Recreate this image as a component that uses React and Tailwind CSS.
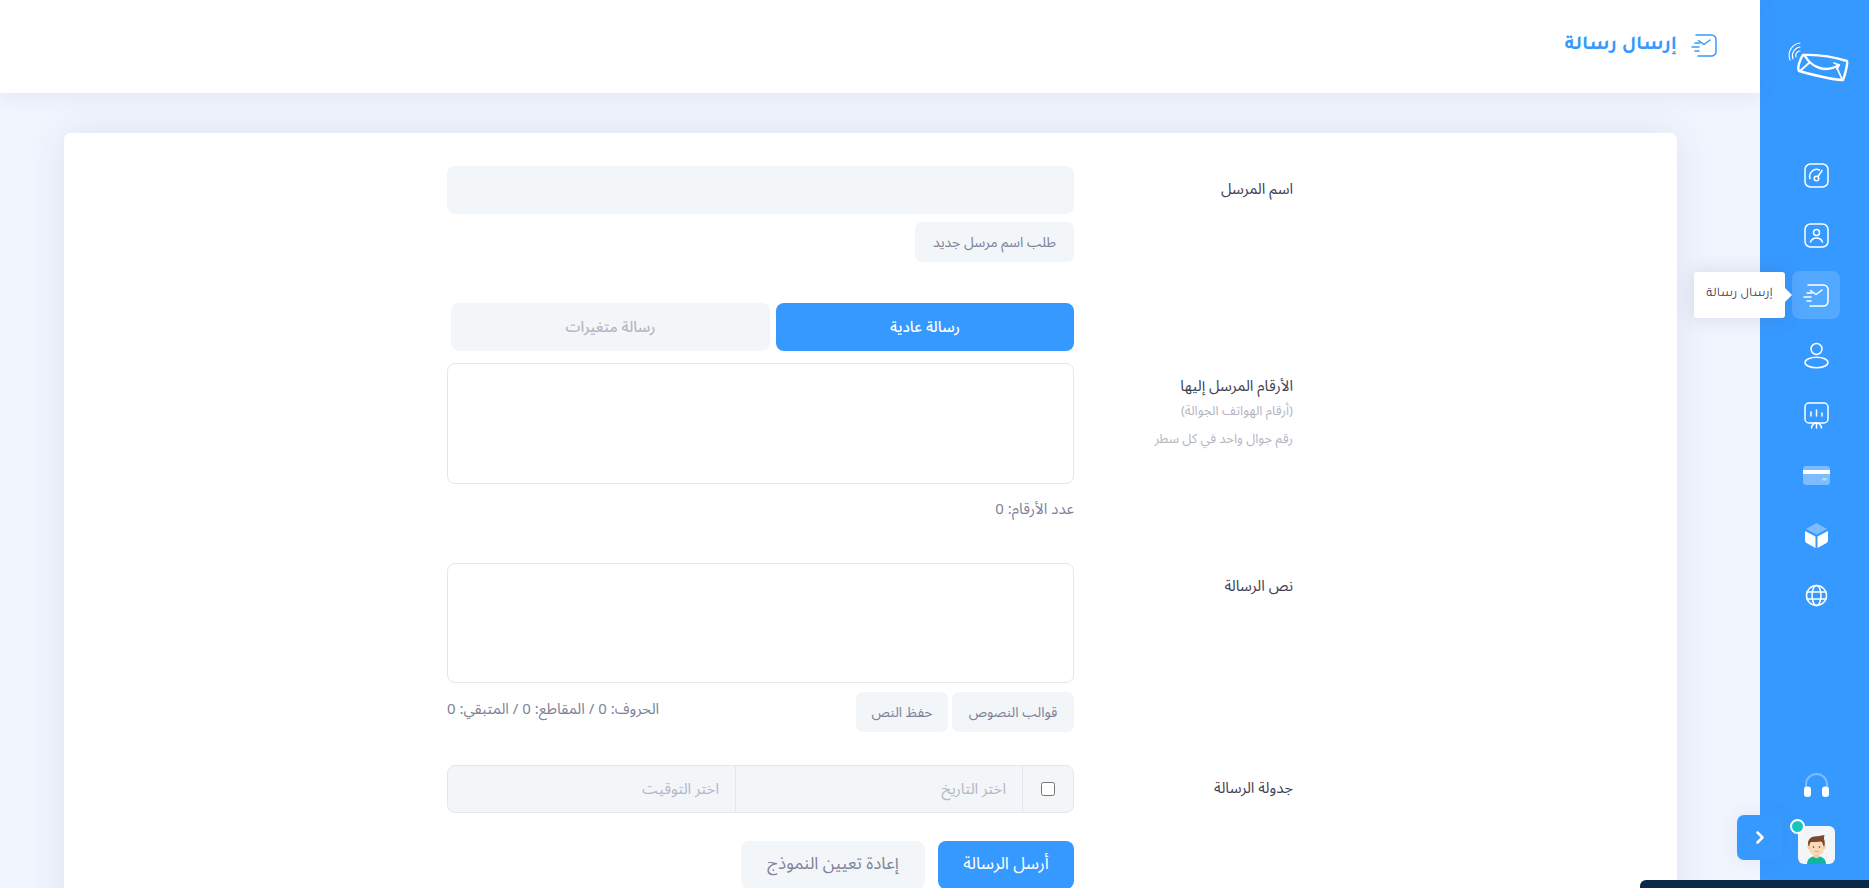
const Stroke = ({ w, h, vb, children, cls = "" }) => (
  <svg width={w} height={h} viewBox={vb} fill="none" stroke="currentColor" strokeWidth="1.5" strokeLinecap="round" strokeLinejoin="round" className={cls}>{children}</svg>
);

const SendIcon = ({ cls }) => (
  <Stroke w={26} h={23} vb="0 0 26 23" cls={cls}>
    <path d="M5 1h15.500A4.500 4.500 0 0 1 25 5.500v12a4.500 4.500 0 0 1-4.500 4.500H7" />
    <path d="M7.500 6.500 13 10.500l6-4.500" />
    <path d="M4 9h5M1 13h7M4 17h4" />
  </Stroke>
);

const icons = [
  <Stroke w={25} h={25} vb="0 0 25 25" key="a">
    <rect x="1" y="1" width="23" height="23" rx="5.500" />
    <path d="M6 15.500a7 7 0 0 1 9.500-8.500" />
    <circle cx="12.500" cy="15.500" r="2.300" />
    <path d="M14 13.500l4-6" />
  </Stroke>,
  <Stroke w={25} h={25} vb="0 0 25 25" key="b">
    <rect x="1" y="1" width="23" height="23" rx="5.500" />
    <circle cx="12.500" cy="9.500" r="3" />
    <path d="M6.500 19a6.500 6.500 0 0 1 12 0" />
  </Stroke>,
  <SendIcon key="c" />,
  <Stroke w={25} h={27} vb="0 0 25 27" key="d">
    <circle cx="12.500" cy="7" r="5.500" />
    <ellipse cx="12.500" cy="20.500" rx="11.500" ry="5.300" />
  </Stroke>,
  <Stroke w={25} h={27} vb="0 0 25 27" key="e">
    <rect x="1" y="1" width="23" height="20" rx="4" />
    <path d="M7 10v4M12.500 8v6M18 11v3M12.500 21v5M7.500 26a5 5 0 0 1 10 0" />
  </Stroke>,
  <svg width="27" height="19" viewBox="0 0 27 19" key="f">
    <rect width="27" height="19" rx="3" fill="#fff" fillOpacity=".35" />
    <rect y="4" width="27" height="4" fill="#fff" />
    <rect x="19" y="12" width="5" height="2.500" rx="1" fill="#fff" fillOpacity=".4" />
  </svg>,
  <svg width="23" height="25" viewBox="0 0 23 25" key="g">
    <path d="M11.500 0 22 6l-10.500 5.500L1 6z" fill="#fff" fillOpacity=".35" />
    <path d="M0 8l10.500 5.500V25L1.500 20A3 3 0 0 1 0 17.500zM23 8l-10.500 5.500V25l9-5a3 3 0 0 0 1.500-2.500z" fill="#fff" />
  </svg>,
  <Stroke w={23} h={23} vb="0 0 23 23" key="h">
    <circle cx="11.500" cy="11.500" r="10" />
    <ellipse cx="11.500" cy="11.500" rx="4.500" ry="10" />
    <path d="M2 8h19M2 15h19" />
  </Stroke>,
];

const Logo = () => (
  <svg width="75" height="55" viewBox="0 0 75 55" fill="none" stroke="#fff" strokeLinecap="round" strokeLinejoin="round">
    <path d="M21 20 C 38 19 52 22 65 26 C 66 28 63 40 61 45 C 50 45 32 40 17 36 C 15 33 18 24 21 20Z" strokeWidth="2.400" />
    <path d="M23 21 C 30 33 44 38 57 30" strokeWidth="2.400" />
    <path d="M52 28l5 2-2 4" strokeWidth="1.800" />
    <path d="M18 36l9-8M55 33l5 11" strokeWidth="1.800" />
    <path d="M8 25C5 17 10 9 18 8M11 24C9 19 12 13 18 12M14 22C13 19 15 16 18 16" strokeWidth="1.100" />
  </svg>
);

const Avatar = () => (
  <svg width="37" height="38" viewBox="0 0 37 38" className="block rounded-[6px] bg-[#f3f6f9]">
    <path d="M9 38c0-5 4-7 6-7.500h7c2 .5 6 2.500 6 7.500z" fill="#12b5a0" />
    <path d="M15.500 27h6v4c-1.500 1.500-4.500 1.500-6 0z" fill="#f5c9a0" />
    <rect x="11" y="14" width="15" height="15" rx="6" fill="#fcd9b6" />
    <rect x="9.500" y="19" width="2.500" height="4" rx="1" fill="#f5c9a0" />
    <rect x="25" y="19" width="2.500" height="4" rx="1" fill="#f5c9a0" />
    <path d="M10.500 20c-1.500-5 1-9 6-9.500 3-.3 6-.5 10-1.500-.5 2-.5 3-.5 4 1 2 1 5 .5 7l-1.500-.5c0-2-1-3.500-2-4-3 .5-7 .5-10 .500-1 1-1.500 2-1.500 3.500z" fill="#7a4a2e" />
    <circle cx="15.500" cy="21" r=".8" fill="#5c3a28" />
    <circle cx="21.500" cy="21" r=".8" fill="#5c3a28" />
    <path d="M16.500 25.500h4" stroke="#d99a78" strokeWidth=".8" />
  </svg>
);

const Row = ({ label, sub, children }) => (
  <div className="flex">
    <div className="w-[219px] shrink-0 pt-[11px]">
      {label && <div className="text-[15px] leading-6 text-[#3f4254]">{label}</div>}
      {sub && sub.map((s) => (
        <div key={s} className="text-[13px] leading-[27.500px] text-[#b5b5c3]">{s}</div>
      ))}
    </div>
    <div className="w-[627px] shrink-0">{children}</div>
  </div>
);

const GreyBtn = ({ children, cls = "" }) => (
  <button className={`h-10 rounded-[6.500px] bg-[#f3f6f9] text-[14px] text-[#7e8299] ${cls}`}>{children}</button>
);

export default function App() {
  return (
    <div className="relative flex h-[888px] w-full overflow-hidden bg-[#f0f5fe] font-['Noto_Sans_Arabic','Noto_Sans',sans-serif]">
      <main className="flex h-full min-w-0 flex-1 flex-col">
        <header dir="rtl" className="relative z-10 flex h-[93px] shrink-0 items-center gap-[14px] bg-white pr-[43px] pb-[2px] text-[#3699ff] shadow-[0_4px_20px_rgba(82,63,105,0.08)]">
          <SendIcon />
          <h1 className="font-['Tajawal',sans-serif] text-[20px] font-bold">إرسال رسالة</h1>
        </header>

        <section className="mt-10 mr-[83px] ml-16 rounded-[6.500px] bg-white pr-[384px] pt-[33px] pb-10 shadow-[0_0_40px_rgba(82,63,105,0.1)]" dir="rtl">
          <Row label="اسم المرسل">
            <input className="block h-12 w-full rounded-[8px] bg-[#f3f6f9] px-4 outline-none" />
            <GreyBtn cls="mt-2 w-[159px]">طلب اسم مرسل جديد</GreyBtn>
          </Row>

          <div className="mt-[41px]">
            <Row>
              <div className="flex gap-[6px] pl-1">
                <button className="h-12 w-[298px] rounded-[8px] bg-[#3699ff] text-[15px] font-medium text-white">رسالة عادية</button>
                <button className="h-12 w-[319px] rounded-[8px] bg-[#f3f6f9] text-[15px] font-medium text-[#b5b5c3]">رسالة متغيرات</button>
              </div>
            </Row>
          </div>

          <div className="mt-3">
            <Row label="الأرقام المرسل إليها" sub={["(أرقام الهواتف الجوالة)", "رقم جوال واحد في كل سطر"]}>
              <textarea className="block h-[121px] w-full resize-none rounded-[8px] border border-[#e4e6ef] bg-white outline-none" />
              <p className="mt-[14px] text-[15px] leading-[22px] text-[#7e8299]">عدد الأرقام: 0</p>
            </Row>
          </div>

          <div className="mt-[43px]">
            <Row label="نص الرسالة">
              <textarea className="block h-[120px] w-full resize-none rounded-[8px] border border-[#e4e6ef] bg-white outline-none" />
              <div className="mt-[9px] flex justify-between">
                <div className="flex gap-[4px]">
                  <GreyBtn cls="w-[122px]">قوالب النصوص</GreyBtn>
                  <GreyBtn cls="w-[92px]">حفظ النص</GreyBtn>
                </div>
                <p className="text-[15px] leading-[34px] text-[#7e8299]">الحروف: 0 / المقاطع: 0 / المتبقي: 0</p>
              </div>
            </Row>
          </div>

          <div className="mt-[33px]">
            <Row label="جدولة الرسالة">
              <div className="flex h-12 w-full items-stretch overflow-hidden rounded-[8px] border border-[#e4e6ef] bg-[#f3f6f9]">
                <div className="flex w-[51px] shrink-0 items-center justify-center border-l border-[#e4e6ef]">
                  <input type="checkbox" className="m-0 h-[14px] w-[14px]" />
                </div>
                <input placeholder="اختر التاريخ" className="w-[287px] shrink-0 border-l border-[#e4e6ef] bg-transparent px-4 text-[15px] outline-none placeholder:text-[#b5b5c3]" />
                <input placeholder="اختر التوقيت" className="min-w-0 flex-1 bg-transparent px-4 text-[15px] outline-none placeholder:text-[#b5b5c3]" />
              </div>
            </Row>
          </div>

          <div className="mt-7">
            <Row>
              <div className="flex gap-[13px]">
                <button className="h-12 w-[136px] rounded-[8px] bg-[#3699ff] text-[17px] text-white">أرسل الرسالة</button>
                <button className="h-12 w-[184px] rounded-[8px] bg-[#f3f6f9] text-[17px] text-[#7e8299]">إعادة تعيين النموذج</button>
              </div>
            </Row>
          </div>
        </section>
      </main>

      <aside className="relative flex h-full w-[109px] shrink-0 flex-col bg-[#3699ff] text-white">
        <div className="pl-[22px] pt-[35px]"><Logo /></div>
        <nav className="mt-[61px] flex flex-col gap-3 pl-8">
          {icons.map((ic, i) => (
            <div key={i} className={`flex h-12 w-12 items-center justify-center rounded-[8px] ${i === 2 ? "bg-white/15" : ""}`}>{ic}</div>
          ))}
        </nav>
        <div className="mt-auto flex flex-col pb-6 pl-[38px]">
          <svg width="25" height="25" viewBox="0 0 25 25" fill="none" className="ml-[6px]">
            <path d="M2 15V12.500a10.500 10.500 0 0 1 21 0V15" stroke="#fff" strokeOpacity=".35" strokeWidth="2" />
            <rect y="14.500" width="7" height="10.500" rx="3" fill="#fff" />
            <rect x="18" y="14.500" width="7" height="10.500" rx="3" fill="#fff" />
          </svg>
          <div className="relative mt-[29px] w-[37px]">
            <Avatar />
            <span className="absolute -left-[8px] -top-[7px] h-[15px] w-[15px] rounded-full border-2 border-white bg-[#1bc5bd]" />
          </div>
        </div>

        <button className="absolute bottom-[28px] -left-[23px] flex h-[45px] w-[45px] items-center justify-center rounded-[7px] bg-[#3699ff] shadow-[0_0_20px_rgba(82,63,105,0.08)]">
          <svg width="10" height="13" viewBox="0 0 10 13" fill="none" stroke="#fff" strokeWidth="2.500" strokeLinecap="round" strokeLinejoin="round"><path d="M2.500 1.500 7.500 6.500 2.500 11.500" /></svg>
        </button>

        <div dir="rtl" className="absolute -left-[66px] top-[272px] flex h-[46px] w-[91px] items-center justify-center rounded-[3px] bg-white font-['Tajawal',sans-serif] text-[13px] text-[#3f4254] shadow-[0_0_20px_rgba(82,63,105,0.15)]">
          إرسال رسالة
          <span className="absolute -right-[7px] top-[16px] h-0 w-0 border-y-[7px] border-l-[7px] border-y-transparent border-l-white" />
        </div>
      </aside>

      <div className="absolute bottom-0 right-0 h-2 w-[229px] rounded-tl-[6px] bg-[#0b2a47]" />
    </div>
  );
}
